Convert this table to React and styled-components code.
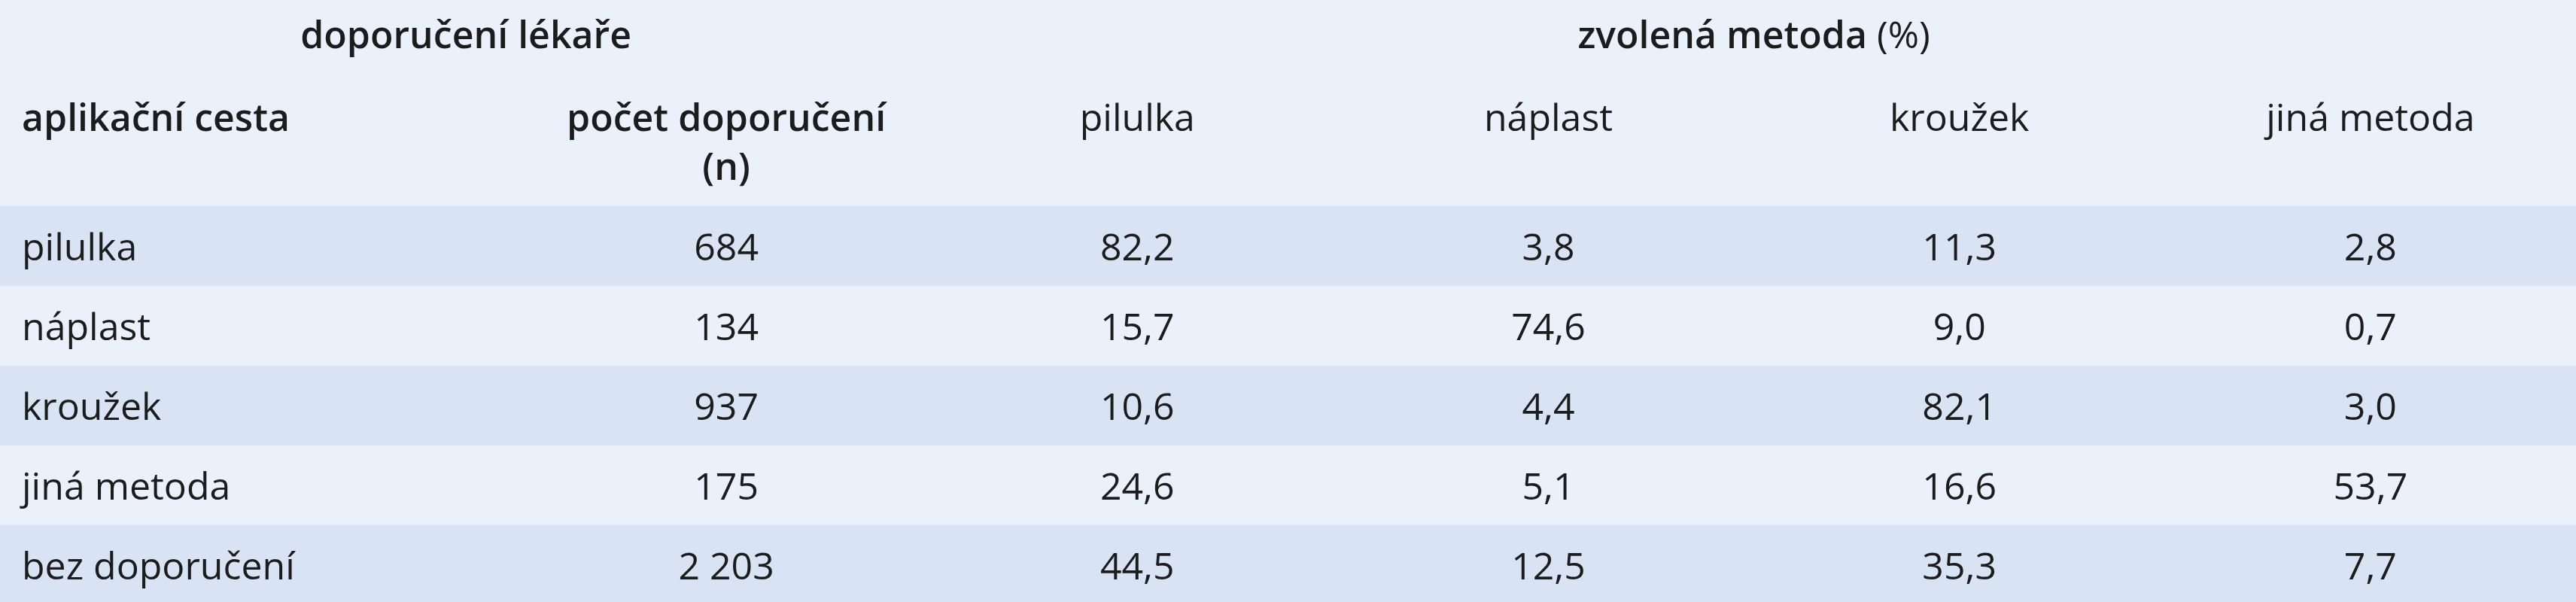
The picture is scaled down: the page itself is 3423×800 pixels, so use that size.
import styled, { createGlobalStyle } from 'styled-components';

const GlobalStyle = createGlobalStyle`
   html, body {
      margin: 0;
      padding: 0;
      background: #ebf1fb;
   }
   body {
      font-family: 'Open Sans', 'Liberation Sans', sans-serif;
      color: #1c1c1c;
   }
`;

const Table = styled.div`
   width: 3423px;
   font-size: 50px;
   line-height: 65px;
`;

const Grid = styled.div`
   display: grid;
   grid-template-columns: 692px repeat(5, 1fr);
   align-items: center;
`;

const Head = styled.div`
   background: #ebf1fb;
   padding: 13px 0 21px;
`;

const TitleRow = styled(Grid)`
   margin-bottom: 45px;
`;

const Title = styled.div`
   grid-column: ${p => p.span};
   text-align: center;
   font-weight: 600;
   & span {
      font-weight: 400;
   }
`;

const HeadRow = styled(Grid)`
   align-items: start;
`;

const HeadCell = styled.div`
   text-align: ${p => (p.left ? 'left' : 'center')};
   padding-left: ${p => (p.left ? '29px' : '0')};
   font-weight: ${p => (p.bold ? 600 : 400)};
`;

const Row = styled(Grid)`
   height: 106px;
   background: ${p => (p.dark ? '#d8e4f4' : '#ebf1fb')};
`;

const Cell = styled.div`
   text-align: ${p => (p.left ? 'left' : 'center')};
   padding-left: ${p => (p.left ? '29px' : '0')};
`;

const rows = [
   ['pilulka', '684', '82,2', '3,8', '11,3', '2,8'],
   ['náplast', '134', '15,7', '74,6', '9,0', '0,7'],
   ['kroužek', '937', '10,6', '4,4', '82,1', '3,0'],
   ['jiná metoda', '175', '24,6', '5,1', '16,6', '53,7'],
   ['bez doporučení', '2 203', '44,5', '12,5', '35,3', '7,7'],
];

const App = () => {
   return (
      <>
         <GlobalStyle />
         <Table>
            <Head>
               <TitleRow>
                  <Title span="1 / 3">doporučení lékaře</Title>
                  <Title span="3 / 7">
                     zvolená metoda <span>(%)</span>
                  </Title>
               </TitleRow>
               <HeadRow>
                  <HeadCell left bold>aplikační cesta</HeadCell>
                  <HeadCell bold>
                     počet doporučení
                     <br />
                     (n)
                  </HeadCell>
                  <HeadCell>pilulka</HeadCell>
                  <HeadCell>náplast</HeadCell>
                  <HeadCell>kroužek</HeadCell>
                  <HeadCell>jiná metoda</HeadCell>
               </HeadRow>
            </Head>
            {rows.map((r, i) => (
               <Row key={r[0]} dark={i % 2 === 0}>
                  {r.map((v, j) => (
                     <Cell key={j} left={j === 0}>
                        {v}
                     </Cell>
                  ))}
               </Row>
            ))}
         </Table>
      </>
   );
};

export default App;
